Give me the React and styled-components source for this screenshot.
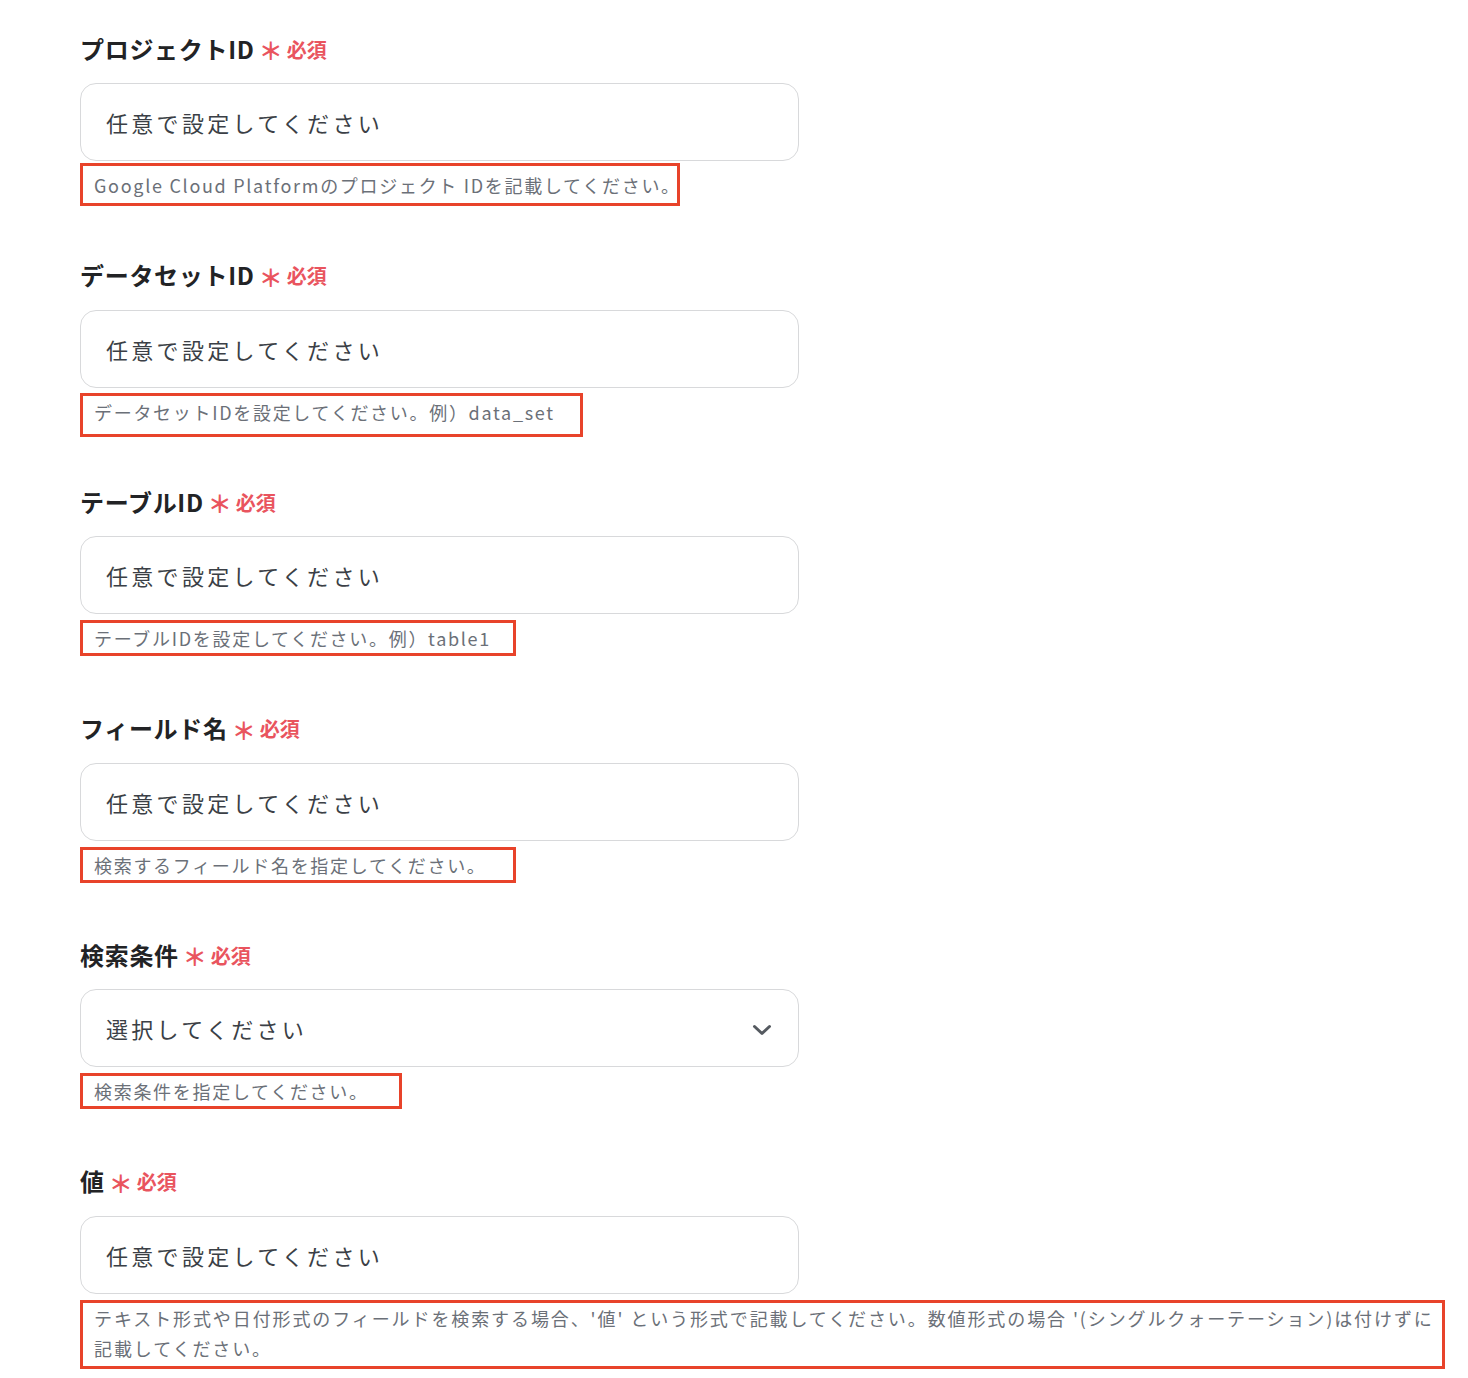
import React from "react";
import styled, { createGlobalStyle } from "styled-components";

const GlobalStyle = createGlobalStyle`
    body {
        margin: 0;
        background: #fff;
        font-family: "Noto Sans CJK JP", "Noto Sans", sans-serif;
    }
`;

const fields = [
    {
        label: "プロジェクトID",
        hint: "Google Cloud Platformのプロジェクト IDを記載してください。",
        box: { width: 600, pt: 4, pb: 3 },
    },
    {
        label: "データセットID",
        hint: "データセットIDを設定してください。例）data_set",
        box: { width: 503, pt: 1, pb: 7 },
    },
    {
        label: "テーブルID",
        hint: "テーブルIDを設定してください。例）table1",
        box: { width: 436, pt: 0, pb: 0 },
    },
    {
        label: "フィールド名",
        hint: "検索するフィールド名を指定してください。",
        box: { width: 436, pt: 0, pb: 0 },
    },
    {
        label: "検索条件",
        hint: "検索条件を指定してください。",
        box: { width: 322, pt: 0, pb: 0 },
        select: true,
    },
    {
        label: "値",
        hint: [
            "テキスト形式や日付形式のフィールドを検索する場合、'値' という形式で記載してください。数値形式の場合 '(シングルクォーテーション)は付けずに",
            "記載してください。",
        ],
        box: { width: 1365, pt: 0, pb: 3, spacing: 1.9 },
    },
];

function Chevron() {
    return (
        <svg width="20" height="14" viewBox="0 0 20 14" fill="none">
            <path
                d="M2.5 3.5 L10 10.5 L17.5 3.5"
                stroke="#555a60"
                strokeWidth="3"
                strokeLinecap="round"
                strokeLinejoin="round"
            />
        </svg>
    );
}

function App() {
    return (
        <>
            <GlobalStyle />
            <Page>
                {fields.map((f) => (
                    <Section key={f.label}>
                        <LabelRow>
                            <Label>{f.label}</Label>
                            <Asterisk>＊</Asterisk>
                            <Required>必須</Required>
                        </LabelRow>
                        {f.select ? (
                            <SelectBox>
                                <span>選択してください</span>
                                <Chevron />
                            </SelectBox>
                        ) : (
                            <Input placeholder="任意で設定してください" />
                        )}
                        <Hint
                            $width={f.box.width}
                            $pt={f.box.pt}
                            $pb={f.box.pb}
                            $spacing={f.box.spacing}
                        >
                            {Array.isArray(f.hint)
                                ? f.hint.map((line) => <div key={line}>{line}</div>)
                                : f.hint}
                        </Hint>
                    </Section>
                ))}
            </Page>
        </>
    );
}

const Page = styled.div`
    padding: 30px 0 0 80px;
    display: flex;
    flex-direction: column;
`;

const Section = styled.div`
    height: 226.5px;
    display: flex;
    flex-direction: column;
    align-items: flex-start;
    &:last-child {
        height: auto;
    }
`;

const LabelRow = styled.div`
    display: flex;
    align-items: center;
    height: 36px;
`;

const Label = styled.span`
    font-size: 24px;
    font-weight: 700;
    color: #222325;
    letter-spacing: 0.7px;
`;

const Asterisk = styled.span`
    color: #e9545e;
    font-size: 24px;
    font-weight: 700;
    line-height: 1;
    margin: 4px 4px 0 4px;
`;

const Required = styled.span`
    color: #e9545e;
    font-size: 20px;
    font-weight: 700;
    margin-top: 2px;
`;

const boxBase = `
    box-sizing: border-box;
    width: 719px;
    height: 78px;
    margin-top: 17px;
    border: 1px solid #d8d9db;
    border-radius: 16px;
    background: #fff;
    font-family: "Noto Sans CJK JP", "Noto Sans", sans-serif;
    font-size: 22px;
    letter-spacing: 3.3px;
    color: #3b3f46;
`;

const Input = styled.input`
    ${boxBase}
    padding: 0 0 0 25px;
    outline: none;
    &::placeholder {
        color: #3b3f46;
    }
`;

const SelectBox = styled.div`
    ${boxBase}
    display: flex;
    align-items: center;
    justify-content: space-between;
    padding: 0 26px 0 25px;
    & svg {
        margin-top: 4px;
    }
`;

const Hint = styled.div`
    box-sizing: border-box;
    width: ${(p) => p.$width}px;
    margin-top: ${(p) => 6 - p.$pt}px;
    padding: ${(p) => p.$pt}px 4px ${(p) => p.$pb}px 11px;
    border: 3px solid #e8432a;
    font-size: 18px;
    line-height: 30px;
    letter-spacing: ${(p) => p.$spacing || 1.7}px;
    color: #6b7078;
    white-space: nowrap;
`;

export default App;
